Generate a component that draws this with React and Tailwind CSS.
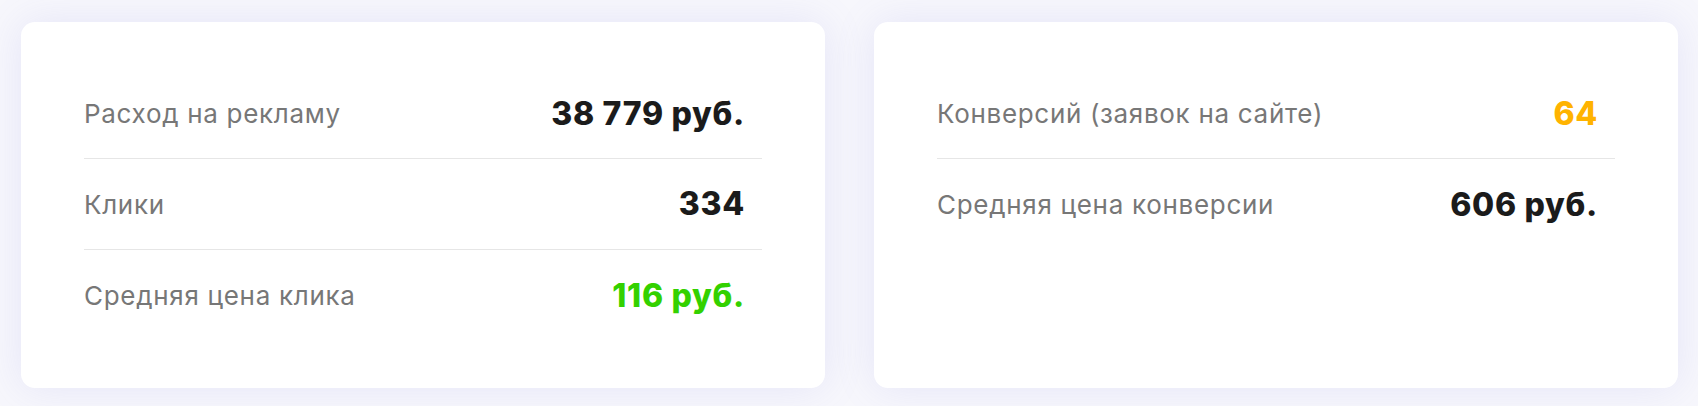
const leftRows = [
  { label: 'Расход на рекламу', value: '38 779 руб.', color: 'text-[#1b1b1b]' },
  { label: 'Клики', value: '334', color: 'text-[#1b1b1b]' },
  { label: 'Средняя цена клика', value: '116 руб.', color: 'text-[#33d100]' },
];

const rightRows = [
  { label: 'Конверсий (заявок на сайте)', value: '64', color: 'text-[#ffb300]' },
  { label: 'Средняя цена конверсии', value: '606 руб.', color: 'text-[#1b1b1b]' },
];

function StatCard({ rows }) {
  return (
    <div className="h-[366px] rounded-[14px] bg-white px-[63px] pt-[47px] shadow-[0_0_40px_rgba(120,120,220,0.14)]">
      <div className="divide-y divide-[#e6e6e6]">
        {rows.map((row) => (
          <div key={row.label} className="flex h-[91px] items-center justify-between first:h-[90px]">
            <span className="text-[26px] font-normal tracking-[0.7px] text-[#777777]">{row.label}</span>
            <span className={`pr-[17px] text-[32px] font-extrabold tracking-[0.7px] ${row.color}`}>
              {row.value}
            </span>
          </div>
        ))}
      </div>
    </div>
  );
}

export default function App() {
  return (
    <div
      className="min-h-[406px] w-full bg-[#f7f7fc] pl-[21px] pr-[20px] pt-[22px]"
      style={{ fontFamily: 'Inter, "Noto Sans", sans-serif' }}
    >
      <div className="grid grid-cols-2 gap-[49px]">
        <StatCard rows={leftRows} />
        <StatCard rows={rightRows} />
      </div>
    </div>
  );
}
